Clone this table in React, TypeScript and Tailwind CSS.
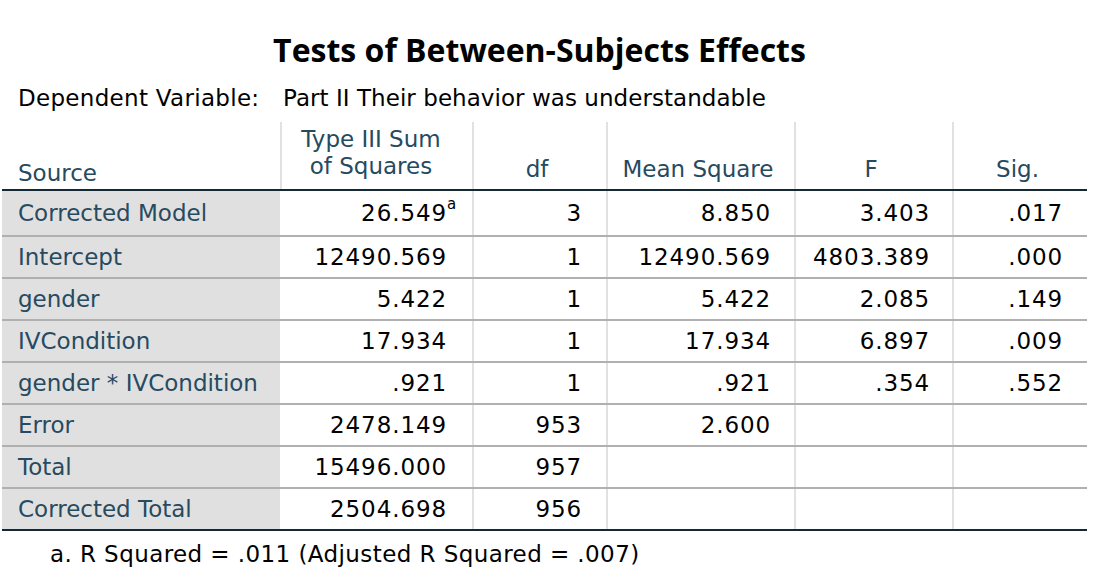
import React from 'react';

interface Row {
  source: string;
  ss: string;
  sup?: string;
  df: string;
  ms: string;
  f: string;
  sig: string;
}

const rows: Row[] = [
  { source: 'Corrected Model', ss: '26.549', sup: 'a', df: '3', ms: '8.850', f: '3.403', sig: '.017' },
  { source: 'Intercept', ss: '12490.569', df: '1', ms: '12490.569', f: '4803.389', sig: '.000' },
  { source: 'gender', ss: '5.422', df: '1', ms: '5.422', f: '2.085', sig: '.149' },
  { source: 'IVCondition', ss: '17.934', df: '1', ms: '17.934', f: '6.897', sig: '.009' },
  { source: 'gender * IVCondition', ss: '.921', df: '1', ms: '.921', f: '.354', sig: '.552' },
  { source: 'Error', ss: '2478.149', df: '953', ms: '2.600', f: '', sig: '' },
  { source: 'Total', ss: '15496.000', df: '957', ms: '', f: '', sig: '' },
  { source: 'Corrected Total', ss: '2504.698', df: '956', ms: '', f: '', sig: '' },
];

const cols = 'grid grid-cols-[278px_192px_134px_188px_158px_135px]';
const num = 'flex items-center justify-end border-l-[2px] border-[#e1e1e1] text-[#010101] tracking-[0.9px]';

const App = () => {
  return (
    <div className="w-[1096px] h-[582px] bg-white font-['DejaVu_Sans',sans-serif] text-[23px] leading-none">
      <div className="w-[1085px] ml-[2px]">
        <div className="h-[74px] flex items-end justify-center pr-[10px] pb-[8px]">
          <h1 className="font-['Open_Sans',sans-serif] text-[32px] font-bold text-[#010101]">
            Tests of Between-Subjects Effects
          </h1>
        </div>
        <div className="h-[48px] flex items-center pl-[16px] text-[#010101]">
          <span className="w-[265px] tracking-[0.3px]">Dependent Variable:</span>
          <span className="tracking-[0.05px]">Part II Their behavior was understandable</span>
        </div>

        {/* header */}
        <div className={`${cols} h-[69px] border-b-[2px] border-[#152935] text-[#264a60]`}>
          <div className="flex items-end pl-[16px] pb-[4px]">Source</div>
          <div className="flex items-end justify-center pr-[12px] pb-[9px] border-l-[2px] border-[#e1e1e1] text-center leading-[27px]">
            Type III Sum<br />of Squares
          </div>
          <div className="flex items-end justify-center pr-[6px] pb-[8px] border-l-[2px] border-[#e1e1e1]">df</div>
          <div className="flex items-end justify-center pr-[6px] pb-[8px] border-l-[2px] border-[#e1e1e1]">Mean Square</div>
          <div className="flex items-end justify-center pr-[6px] pb-[8px] border-l-[2px] border-[#e1e1e1]">F</div>
          <div className="flex items-end justify-center pr-[6px] pb-[8px] border-l-[2px] border-[#e1e1e1]">Sig.</div>
        </div>

        {/* body */}
        {rows.map((r, i) => (
          <div
            key={r.source}
            className={`${cols} ${i === 0 ? 'h-[46px]' : 'h-[42px]'} ${
              i === rows.length - 1 ? 'border-b-[2px] border-[#152935]' : 'border-b-[2px] border-[#b0b0b0]'
            }`}
          >
            <div className="bg-[#e0e0e0] flex items-center pl-[16px] text-[#264a60]">{r.source}</div>
            <div className="flex items-center justify-end pr-[17px] text-[#010101] tracking-[0.9px]">
              {r.ss}
              <span className="inline-block w-[8px] text-[15px] tracking-normal -translate-y-[9px]">{r.sup ?? ''}</span>
            </div>
            <div className={`${num} pr-[24px]`}>{r.df}</div>
            <div className={`${num} pr-[23px]`}>{r.ms}</div>
            <div className={`${num} pr-[22px]`}>{r.f}</div>
            <div className={`${num} pr-[24px]`}>{r.sig}</div>
          </div>
        ))}

        <div className="pl-[48px] pt-[12px] text-[#010101] tracking-[0.42px]">
          a. R Squared = .011 (Adjusted R Squared = .007)
        </div>
      </div>
    </div>
  );
};

export default App;
